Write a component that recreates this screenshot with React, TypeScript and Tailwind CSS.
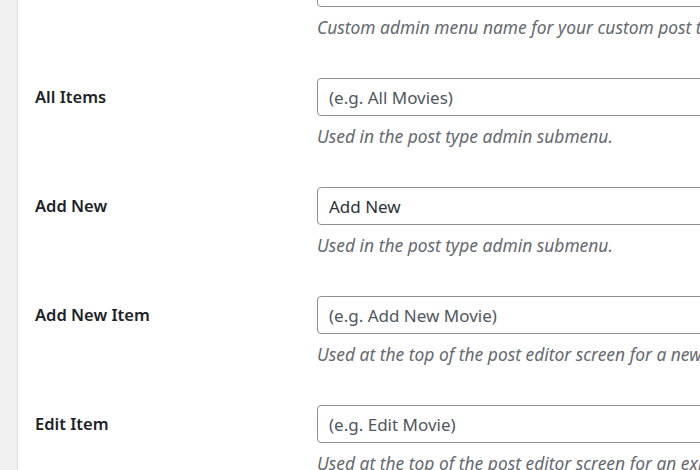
const rows = [
  { label: '', value: '', placeholder: '', help: 'Custom admin menu name for your custom post type' },
  { label: 'All Items', value: '', placeholder: '(e.g. All Movies)', help: 'Used in the post type admin submenu.' },
  { label: 'Add New', value: 'Add New', placeholder: '', help: 'Used in the post type admin submenu.' },
  { label: 'Add New Item', value: '', placeholder: '(e.g. Add New Movie)', help: 'Used at the top of the post editor screen for a new post type.' },
  { label: 'Edit Item', value: '', placeholder: '(e.g. Edit Movie)', help: 'Used at the top of the post editor screen for an existing post type.' },
];

export default function App() {
  return (
    <div className="flex h-[470px] w-[700px] overflow-hidden bg-white font-['Noto_Sans',sans-serif]">
      <div className="w-[17px] shrink-0 bg-[#f0f0f1]" />
      <div className="w-px shrink-0 bg-[#dcdcde]" />
      <div className="-mt-[31px] flex min-w-0 flex-1 flex-col">
        {rows.map((row, i) => (
          <div key={i} className="flex h-[109px] shrink-0">
            <div className="flex h-[38px] w-[299px] shrink-0 items-center pl-[17px] text-[16.5px] font-semibold text-[#1d2327]">
              {row.label}
            </div>
            <div className="flex min-w-0 flex-1 flex-col">
              <input
                readOnly
                value={row.value}
                placeholder={row.placeholder}
                className="h-[38px] w-[520px] shrink-0 rounded-[4px] border border-[#8c8f94] bg-white px-[11px] text-[17px] text-[#2c3338] outline-none placeholder:text-[#50575e]"
              />
              <p className="mt-[8px] whitespace-nowrap text-[17.4px] italic leading-[24px] text-[#646970]">
                {row.help}
              </p>
            </div>
          </div>
        ))}
      </div>
    </div>
  );
}
